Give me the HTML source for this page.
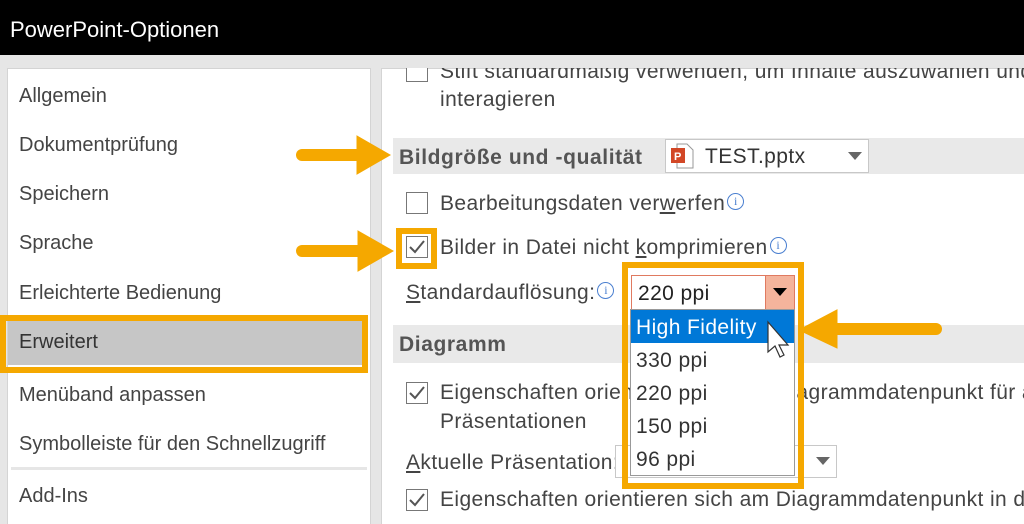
<!DOCTYPE html>
<html><head><meta charset="utf-8"><style>
*{margin:0;padding:0;box-sizing:border-box}
html,body{width:1024px;height:524px;overflow:hidden}
body{background:#e6e6e6;font-family:"Liberation Sans",sans-serif;color:#444;position:relative;font-size:20px}
#w{position:absolute;left:0;top:0;width:1024px;height:524px;overflow:hidden}
.a{position:absolute;white-space:nowrap;line-height:22px}
.r{font-size:21px;letter-spacing:0.4px}
.cb{position:absolute;width:22px;height:22px;border:1px solid #777;background:#fff}
.info{display:inline-block;vertical-align:top;margin-left:2px;width:17px;height:17px;border:1.5px solid #4a7fd0;border-radius:50%;color:#4a7fd0;font-size:12px;line-height:14px;text-align:center;letter-spacing:0;font-family:"Liberation Serif",serif}
u{text-decoration:underline}
</style></head><body><div id="w">
<div style="position:absolute;left:0;top:0;width:1024px;height:55px;background:#000"></div>
<div class="a" style="left:10px;top:19px;color:#fff;font-size:22px">PowerPoint-Optionen</div>
<div style="position:absolute;left:7px;top:68px;width:364px;height:456px;background:#fff;border:1px solid #d4d4d4;border-bottom:none"></div>
<div style="position:absolute;left:381px;top:68px;width:643px;height:456px;background:#fff;border-left:1px solid #d4d4d4;border-top:1px solid #d4d4d4"></div>
<div class="a" style="left:19px;top:85px">Allgemein</div>
<div class="a" style="left:19px;top:134px">Dokumentprüfung</div>
<div class="a" style="left:19px;top:183px">Speichern</div>
<div class="a" style="left:19px;top:232px">Sprache</div>
<div class="a" style="left:19px;top:282px">Erleichterte Bedienung</div>
<div style="position:absolute;left:8px;top:321px;width:354px;height:44px;background:#c6c6c6"></div>
<div style="position:absolute;left:0;top:315px;width:368px;height:58px;border:6px solid #f5a800"></div>
<div class="a" style="left:19px;top:331px;color:#333">Erweitert</div>
<div class="a" style="left:19px;top:384px">Menüband anpassen</div>
<div class="a" style="left:19px;top:433px">Symbolleiste für den Schnellzugriff</div>
<div style="position:absolute;left:11px;top:467px;width:356px;height:3px;background:#e6e6e6"></div>
<div class="a" style="left:19px;top:485px">Add-Ins</div>

<div class="cb" style="left:406px;top:60px"></div>
<div class="a r" style="left:440px;top:61px">Stift standardmäßig verwenden, um Inhalte auszuwählen und</div>
<div style="position:absolute;left:382px;top:56px;width:642px;height:12px;background:#e6e6e6"></div>
<div class="a r" style="left:440px;top:89px">interagieren</div>

<div style="position:absolute;left:393px;top:138px;width:631px;height:36px;background:#e9e9e9"></div>
<div class="a r" style="left:399px;top:147px;font-weight:bold;color:#555;letter-spacing:0.6px">Bildgröße und -qualität</div>
<div style="position:absolute;left:665px;top:139px;width:204px;height:34px;background:#fff;border:1px solid #c8c8c8"></div>
<svg style="position:absolute;left:670px;top:143px" width="24" height="26"><path d="M7 1h10l6 6v18H7z" fill="#fff" stroke="#999"/><rect x="1" y="5" width="14" height="15" fill="#d24726"/><text x="4" y="17" font-size="11" fill="#fff" font-family="Liberation Sans" font-weight="bold">P</text></svg>
<div class="a r" style="left:705px;top:146px;color:#333">TEST.pptx</div>
<svg style="position:absolute;left:848px;top:152px" width="14" height="8"><path d="M0 0h14L7 8z" fill="#666"/></svg>

<div class="cb" style="left:406px;top:192px"></div>
<div class="a r" style="left:440px;top:193px">Bearbeitungsdaten ver<u>w</u>erfen<span class="info">i</span></div>
<div class="cb" style="left:406px;top:236px"></div>
<svg style="position:absolute;left:409px;top:240px" width="16" height="14"><path d="M1 7l5 5L15 1" fill="none" stroke="#555" stroke-width="2"/></svg>
<div style="position:absolute;left:396px;top:228px;width:41px;height:41px;border:6px solid #f5a800"></div>
<div class="a r" style="left:440px;top:237px">Bilder in Datei nicht <u>k</u>omprimieren<span class="info">i</span></div>
<div class="a r" style="left:406px;top:282px"><u>S</u>tandardauflösung:<span class="info">i</span></div>

<div style="position:absolute;left:393px;top:325px;width:631px;height:38px;background:#e9e9e9"></div>
<div class="a r" style="left:399px;top:334px;font-weight:bold;color:#555;letter-spacing:0.6px">Diagramm</div>

<div class="cb" style="left:406px;top:382px"></div>
<svg style="position:absolute;left:409px;top:386px" width="16" height="14"><path d="M1 7l5 5L15 1" fill="none" stroke="#555" stroke-width="2"/></svg>
<div class="a r" style="left:440px;top:382px">Eigenschaften orientieren sich am Diagrammdatenpunkt für alle neuen</div>
<div class="a r" style="left:440px;top:411px">Präsentationen</div>
<div class="a r" style="left:406px;top:452px"><u>A</u>ktuelle Präsentation:</div>
<div style="position:absolute;left:615px;top:445px;width:222px;height:33px;background:#fff;border:1px solid #c8c8c8"></div>
<svg style="position:absolute;left:816px;top:457px" width="14" height="8"><path d="M0 0h14L7 8z" fill="#666"/></svg>
<div class="cb" style="left:406px;top:489px"></div>
<svg style="position:absolute;left:409px;top:493px" width="16" height="14"><path d="M1 7l5 5L15 1" fill="none" stroke="#555" stroke-width="2"/></svg>
<div class="a r" style="left:440px;top:489px">Eigenschaften orientieren sich am Diagrammdatenpunkt in der</div>

<div style="position:absolute;left:631px;top:275px;width:164px;height:35px;background:#fff;border:1px solid #e07a60"></div>
<div style="position:absolute;left:765px;top:275px;width:30px;height:35px;background:#f4b49c;border:1px solid #e07a60"></div>
<svg style="position:absolute;left:773px;top:288px" width="14" height="8"><path d="M0 0h14L7 8z" fill="#000"/></svg>
<div class="a r" style="left:638px;top:283px;color:#222">220 ppi</div>
<div style="position:absolute;left:630px;top:309px;width:165px;height:167px;background:#fff;border:1px solid #999"></div>
<div style="position:absolute;left:631px;top:310px;width:163px;height:33px;background:#0078d7"></div>
<div class="a r" style="left:636px;top:317px;color:#fff">High Fidelity</div>
<div class="a r" style="left:636px;top:350px;color:#333">330 ppi</div>
<div class="a r" style="left:636px;top:383px;color:#333">220 ppi</div>
<div class="a r" style="left:636px;top:416px;color:#333">150 ppi</div>
<div class="a r" style="left:636px;top:449px;color:#333">96 ppi</div>
<div style="position:absolute;left:622px;top:262px;width:182px;height:227px;border:6px solid #f5a800"></div>
<svg style="position:absolute;left:0;top:0" width="1024" height="524">
<path d="M768 322v30l7-6 5 11 4-2-5-10h9z" fill="#fff" stroke="#333" stroke-width="1.2"/>
<g fill="#f5a800" stroke="#f5a800" stroke-linecap="round">
<line x1="302" y1="155" x2="360" y2="155" stroke-width="12"/>
<path d="M357 136L390 155L357 174z"/>
<line x1="302" y1="251" x2="362" y2="251" stroke-width="12"/>
<path d="M358 231L393 251L358 271z"/>
<line x1="936" y1="329" x2="830" y2="329" stroke-width="12"/>
<path d="M837 310L799 330L837 348z"/>
</g></svg>
</div></body></html>
